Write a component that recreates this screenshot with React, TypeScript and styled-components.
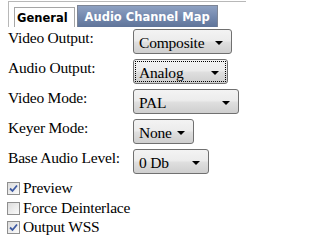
import React from "react";
import styled, { createGlobalStyle } from "styled-components";

const GlobalStyle = createGlobalStyle`
  html, body {
    margin: 0;
    padding: 0;
    background: #ffffff;
  }
`;

const Page = styled.div`
  width: 246px;
  height: 245px;
  overflow: hidden;
  font-family: "Liberation Serif", "Times New Roman", serif;
  font-size: 15.5px;
  letter-spacing: -0.2px;
  color: #000;
`;

const TabBar = styled.div`
  display: flex;
  align-items: flex-end;
  gap: 2px;
  height: 25px;
  margin: 1px 0 0 8px;
  padding-left: 5px;
  border-top: 1px solid #b8b8b8;
  border-left: 1px solid #b8b8b8;
`;

const Tab = styled.div<{ active?: boolean }>`
  box-sizing: border-box;
  display: flex;
  align-items: center;
  font-family: "DejaVu Sans", Verdana, sans-serif;
  font-weight: bold;
  font-size: 11.5px;
  letter-spacing: 0;
  padding: 0 ${({ active }) => (active ? "6px 0 2px" : "7px 0 7px")};
  height: ${({ active }) => (active ? "20px" : "22px")};
  border: 1px solid ${({ active }) => (active ? "#a6a6a6" : "#7d8595")};
  border-bottom: none;
  color: ${({ active }) => (active ? "#000" : "#fff")};
  background: ${({ active }) =>
    active ? "#ffffff" : "linear-gradient(#8ea1c2, #7287ad 55%, #5f7499)"};
`;

const Form = styled.div`
  display: grid;
  grid-template-columns: 125px auto;
  align-items: start;
  row-gap: 5px;
  padding: 2px 0 0 8px;
`;

const Label = styled.div`
  line-height: 18px;
`;

const Select = styled.div<{ width: number; focused?: boolean }>`
  position: relative;
  box-sizing: border-box;
  width: ${({ width }) => width}px;
  height: 25px;
  padding: 2px 0 0 5px;
  display: flex;
  align-items: center;
  border: 1px solid #707070;
  border-radius: 3px;
  background: linear-gradient(#f3f3f3, #ececec 45%, #dedede 55%, #cfcfcf);
  line-height: 18px;

  &::before {
    content: "";
    display: ${({ focused }) => (focused ? "block" : "none")};
    position: absolute;
    inset: 1px;
    border: 1px dotted #000;
  }
`;

const Arrow = styled.span`
  position: absolute;
  right: 8px;
  top: 11px;
  width: 0;
  height: 0;
  border-left: 4px solid transparent;
  border-right: 4px solid transparent;
  border-top: 4px solid #000;
`;

const Checks = styled.div`
  display: flex;
  flex-direction: column;
  gap: 1.5px;
  padding: 5px 0 0 7px;
`;

const CheckRow = styled.div`
  display: flex;
  align-items: center;
  gap: 3px;
  height: 18px;
  line-height: 18px;
`;

const Box = styled.span`
  box-sizing: border-box;
  width: 13px;
  height: 13px;
  border: 1px solid #8f8f8f;
  background: linear-gradient(135deg, #dcdcdc, #fbfbfb);
  display: flex;
  align-items: center;
  justify-content: center;
  margin-top: 1px;
`;

const selects = [
  { label: "Video Output:", value: "Composite", width: 99 },
  { label: "Audio Output:", value: "Analog", width: 95, focused: true },
  { label: "Video Mode:", value: "PAL", width: 106 },
  { label: "Keyer Mode:", value: "None", width: 61 },
  { label: "Base Audio Level:", value: "0 Db", width: 76 },
];

const checks = [
  { label: "Preview", checked: true },
  { label: "Force Deinterlace", checked: false },
  { label: "Output WSS", checked: true },
];

const CheckMark = () => (
  <svg width="9" height="9" viewBox="0 0 9 9">
    <path d="M1 4.5 L3.5 7 L8 1.5" fill="none" stroke="#3e5aa2" strokeWidth="1.8" />
  </svg>
);

export default function App() {
  return (
    <Page>
      <GlobalStyle />
      <TabBar>
        <Tab active>General</Tab>
        <Tab>Audio Channel Map</Tab>
      </TabBar>
      <Form>
        {selects.map((s) => (
          <React.Fragment key={s.label}>
            <Label>{s.label}</Label>
            <Select width={s.width} focused={s.focused}>
              {s.value}
              <Arrow />
            </Select>
          </React.Fragment>
        ))}
      </Form>
      <Checks>
        {checks.map((c) => (
          <CheckRow key={c.label}>
            <Box>{c.checked && <CheckMark />}</Box>
            {c.label}
          </CheckRow>
        ))}
      </Checks>
    </Page>
  );
}
